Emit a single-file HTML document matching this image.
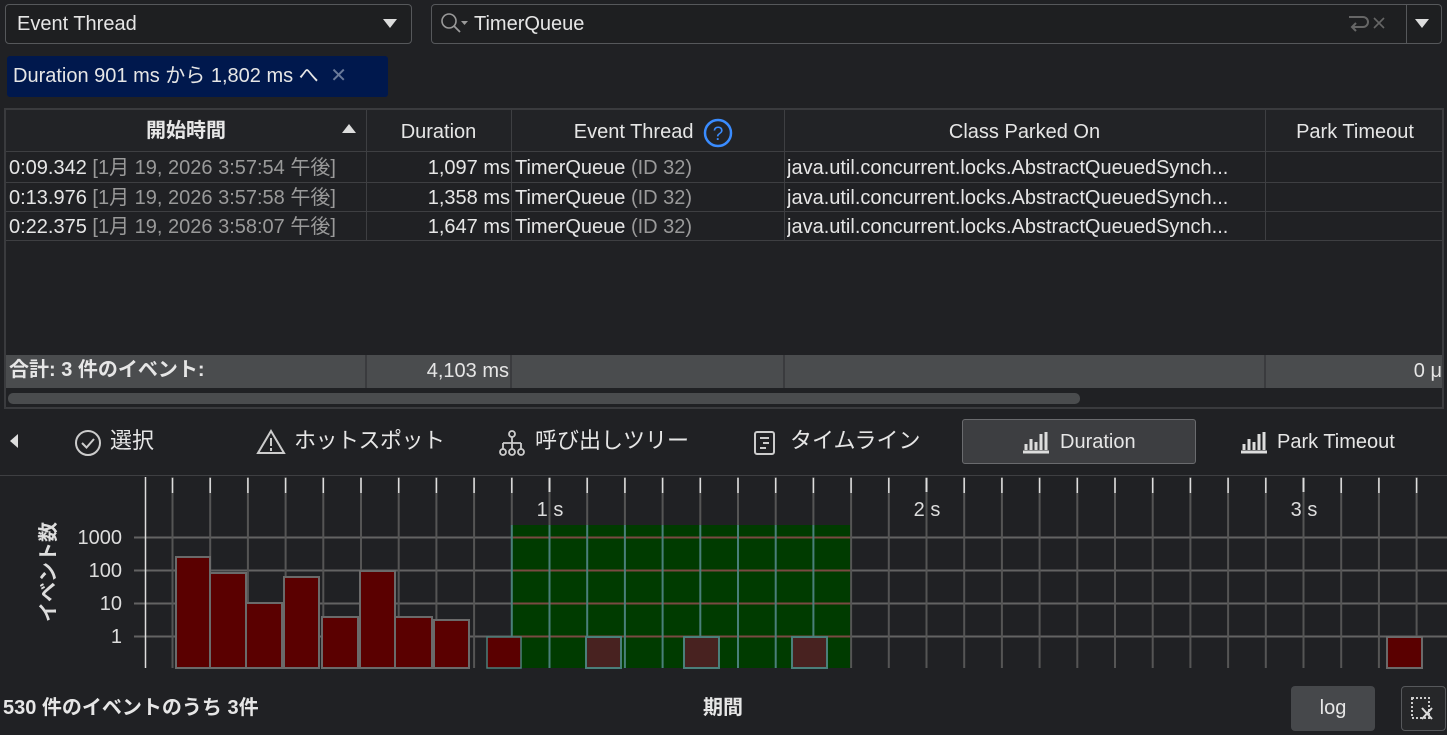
<!DOCTYPE html>
<html><head><meta charset="utf-8"><style>
*{box-sizing:border-box;margin:0;padding:0}
body{width:1447px;height:735px;background:#202124;color:#e6e6e6;font-family:"Liberation Sans","Noto Sans CJK JP",sans-serif;font-size:20px;position:relative;overflow:hidden}
.a{position:absolute;white-space:nowrap;line-height:26px}
.box{border:1px solid #56585b;border-radius:4px;background:#1e1f21}
.g{color:#9a9a9a}
.cell{position:absolute;height:29px;line-height:29px;overflow:hidden;white-space:nowrap}
</style></head><body>
<div class="a box" style="left:5px;top:4px;width:407px;height:40px"></div>
<div class="a" style="left:17px;top:11px">Event Thread</div>
<svg class="a" style="left:383px;top:19px" width="14" height="10"><path d="M0 0H14L7 9Z" fill="#ddd"/></svg>
<div class="a box" style="left:431px;top:4px;width:1011px;height:40px"></div>
<div class="a" style="left:1406px;top:5px;width:1px;height:38px;background:#56585b"></div>
<svg class="a" style="left:1415px;top:19px" width="14" height="10"><path d="M0 0H14L7 9Z" fill="#ddd"/></svg>
<svg class="a" style="left:440px;top:12px" width="30" height="24"><circle cx="9" cy="9" r="7" stroke="#9a9a9a" stroke-width="1.6" fill="none"/><path d="M14 14L20 20" stroke="#9a9a9a" stroke-width="1.8"/><path d="M21 9H28L24.5 13Z" fill="#9a9a9a"/></svg>
<div class="a" style="left:474px;top:11px">TimerQueue</div>
<svg class="a" style="left:1346px;top:12px" width="48" height="24"><path d="M3 5H17A5 5 0 0 1 17 15H7M10 11L6 15L10 19" stroke="#666" stroke-width="2" fill="none"/><path d="M28 6L38 16M38 6L28 16" stroke="#666" stroke-width="1.6"/></svg>
<div class="a" style="left:7px;top:56px;width:381px;height:41px;background:#00184d;border-radius:3px"></div>
<div class="a" style="left:13px;top:63px">Duration 901 ms から 1,802 ms へ <span style="color:#6a7a9a;margin-left:6px">✕</span></div>

<div class="a" style="left:4px;top:108px;width:1440px;height:301px;border:2px solid #3a3b3e;background:#202124"></div>
<div class="a" style="left:6px;top:110px;width:1436px;height:42px;background:#222326;border-bottom:1px solid #3e3f42"></div>
<div class="a" style="left:6px;top:118px;width:360px;text-align:center;font-weight:bold">開始時間</div>
<svg class="a" style="left:342px;top:124px" width="14" height="9"><path d="M0 9H14L7 0Z" fill="#ddd"/></svg>
<div class="a" style="left:366px;top:119px;width:145px;text-align:center">Duration</div>
<div class="a" style="left:511px;top:119px;width:273px;text-align:center">Event Thread&nbsp;&nbsp;&nbsp;&nbsp;&nbsp;</div>
<svg class="a" style="left:703px;top:118px" width="30" height="30"><circle cx="15" cy="15" r="13" stroke="#3a8cff" stroke-width="2.5" fill="none"/><text x="15" y="22" text-anchor="middle" fill="#3a8cff" font-size="19" font-family="Liberation Sans">?</text></svg>
<div class="a" style="left:784px;top:119px;width:481px;text-align:center">Class Parked On</div>
<div class="a" style="left:1265px;top:119px;width:180px;text-align:center">Park Timeout</div>
<div class="a" style="left:366px;top:110px;width:1px;height:131px;background:#3e3f42"></div>
<div class="a" style="left:511px;top:110px;width:1px;height:131px;background:#3e3f42"></div>
<div class="a" style="left:784px;top:110px;width:1px;height:131px;background:#3e3f42"></div>
<div class="a" style="left:1265px;top:110px;width:1px;height:131px;background:#3e3f42"></div>
<div class="a" style="left:6px;top:182px;width:1436px;height:1px;background:#3e3f42"></div>
<div class="a" style="left:6px;top:211px;width:1436px;height:1px;background:#3e3f42"></div>
<div class="a" style="left:6px;top:240px;width:1436px;height:1px;background:#3e3f42"></div>

<div class="cell" style="left:9px;top:154px">0:09.342 <span class="g">[1月 19, 2026 3:57:54 午後]</span></div>
<div class="cell" style="left:366px;top:154px;width:144px;text-align:right">1,097 ms</div>
<div class="cell" style="left:515px;top:154px">TimerQueue <span class="g">(ID 32)</span></div>
<div class="cell" style="left:787px;top:154px">java.util.concurrent.locks.AbstractQueuedSynch...</div>
<div class="cell" style="left:9px;top:184px">0:13.976 <span class="g">[1月 19, 2026 3:57:58 午後]</span></div>
<div class="cell" style="left:366px;top:184px;width:144px;text-align:right">1,358 ms</div>
<div class="cell" style="left:515px;top:184px">TimerQueue <span class="g">(ID 32)</span></div>
<div class="cell" style="left:787px;top:184px">java.util.concurrent.locks.AbstractQueuedSynch...</div>
<div class="cell" style="left:9px;top:213px">0:22.375 <span class="g">[1月 19, 2026 3:58:07 午後]</span></div>
<div class="cell" style="left:366px;top:213px;width:144px;text-align:right">1,647 ms</div>
<div class="cell" style="left:515px;top:213px">TimerQueue <span class="g">(ID 32)</span></div>
<div class="cell" style="left:787px;top:213px">java.util.concurrent.locks.AbstractQueuedSynch...</div>

<div class="a" style="left:6px;top:355px;width:1436px;height:33px;background:#4a4c4e"></div>
<div class="a" style="left:365px;top:355px;width:2px;height:33px;background:#3a3b3e"></div>
<div class="a" style="left:510px;top:355px;width:2px;height:33px;background:#3a3b3e"></div>
<div class="a" style="left:783px;top:355px;width:2px;height:33px;background:#3a3b3e"></div>
<div class="a" style="left:1264px;top:355px;width:2px;height:33px;background:#3a3b3e"></div>
<div class="a" style="left:9px;top:357px;font-weight:bold">合計: 3 件のイベント:</div>
<div class="a" style="left:366px;top:358px;width:143px;text-align:right">4,103 ms</div>
<div class="a" style="left:1380px;top:358px;width:62px;text-align:right;overflow:hidden">0 μ</div>
<div class="a" style="left:8px;top:393px;width:1072px;height:11px;background:#4a4c4e;border-radius:5px"></div>

<svg class="a" style="left:9px;top:434px" width="10" height="14"><path d="M9 0V14L1 7Z" fill="#ddd"/></svg>
<svg class="a" style="left:74px;top:429px" width="28" height="28"><circle cx="14" cy="14" r="12" stroke="#ccc" stroke-width="2" fill="none"/><path d="M8 14L12.5 18.5L20 10" stroke="#ccc" stroke-width="2" fill="none"/></svg>
<div class="a" style="left:110px;top:428px;font-size:22px">選択</div>
<svg class="a" style="left:256px;top:429px" width="30" height="26"><path d="M15 2L28 24H2Z" stroke="#ccc" stroke-width="2" fill="none"/><path d="M15 9V17M15 19V22" stroke="#ccc" stroke-width="2"/></svg>
<div class="a" style="left:294px;top:428px;font-size:22px;letter-spacing:-0.5px">ホットスポット</div>
<svg class="a" style="left:498px;top:429px" width="28" height="28"><circle cx="14" cy="5" r="3" stroke="#ccc" stroke-width="1.8" fill="none"/><path d="M14 8V14M5 14H23M5 14V20M14 14V20M23 14V20" stroke="#ccc" stroke-width="1.8" fill="none"/><circle cx="5" cy="23" r="3" stroke="#ccc" stroke-width="1.8" fill="none"/><circle cx="14" cy="23" r="3" stroke="#ccc" stroke-width="1.8" fill="none"/><circle cx="23" cy="23" r="3" stroke="#ccc" stroke-width="1.8" fill="none"/></svg>
<div class="a" style="left:535px;top:428px;font-size:22px">呼び出しツリー</div>
<svg class="a" style="left:753px;top:430px" width="24" height="26"><rect x="2" y="2" width="19" height="22" rx="2" stroke="#ccc" stroke-width="2" fill="none"/><path d="M7 8H16M10 13H16M7 18H13" stroke="#ccc" stroke-width="2"/></svg>
<div class="a" style="left:790px;top:428px;font-size:22px">タイムライン</div>
<div class="a" style="left:962px;top:419px;width:234px;height:45px;background:#3d3e41;border:1px solid #6a6b6e;border-radius:3px"></div>
<svg class="a" style="left:1022px;top:430px" width="28" height="24"><path d="M1 22H27M4 14V20M9 9V20M14 12V20M19 4V20M24 2V20" stroke="#ddd" stroke-width="3"/></svg>
<div class="a" style="left:1060px;top:429px">Duration</div>
<svg class="a" style="left:1240px;top:430px" width="28" height="24"><path d="M1 22H27M4 14V20M9 9V20M14 12V20M19 4V20M24 2V20" stroke="#ddd" stroke-width="3"/></svg>
<div class="a" style="left:1277px;top:429px">Park Timeout</div>
<div class="a" style="left:0;top:475px;width:1447px;height:1px;background:#3e3f42"></div>

<svg class="a" style="left:0;top:0" width="1447" height="735">
<rect x="511" y="525" width="340" height="143" fill="#003b00"/>
<path d="M134 537.5H1447M134 570.5H1447M134 603.5H1447M134 636.5H1447" stroke="#636363" stroke-width="2"/>
<path d="M511 537.5H851M511 570.5H851M511 603.5H851M511 636.5H851" stroke="#7a4a42" stroke-width="2"/>
<path d="M172.5 477V668M210.2 477V668M247.9 477V668M285.6 477V668M323.3 477V668M361 477V668M398.7 477V668M436.4 477V668M474.1 477V668M511.8 477V525M549.5 477V525M587.2 477V525M624.9 477V525M662.6 477V525M700.3 477V525M738 477V525M775.7 477V525M813.4 477V525M851.1 477V668M888.8 477V668M926.5 477V668M964.2 477V668M1001.9 477V668M1039.6 477V668M1077.3 477V668M1115 477V668M1152.7 477V668M1190.4 477V668M1228.1 477V668M1265.8 477V668M1303.5 477V668M1341.2 477V668M1378.9 477V668M1416.6 477V668" stroke="#555" stroke-width="2"/>
<path d="M511.8 525V668M549.5 525V668M587.2 525V668M624.9 525V668M662.6 525V668M700.3 525V668M738 525V668M775.7 525V668M813.4 525V668" stroke="#4a7f7a" stroke-width="2"/>
<path d="M172.5 478V493M210.2 478V493M247.9 478V493M285.6 478V493M323.3 478V493M361 478V493M398.7 478V493M436.4 478V493M474.1 478V493M511.8 478V493M587.2 478V493M624.9 478V493M662.6 478V493M700.3 478V493M738 478V493M775.7 478V493M813.4 478V493M851.1 478V493M888.8 478V493M964.2 478V493M1001.9 478V493M1039.6 478V493M1077.3 478V493M1115 478V493M1152.7 478V493M1190.4 478V493M1228.1 478V493M1265.8 478V493M1341.2 478V493M1378.9 478V493M1416.6 478V493" stroke="#ddd" stroke-width="1.5"/>
<path d="M549.5 478V492M926.5 478V492M1303.5 478V492" stroke="#ddd" stroke-width="2"/>
<path d="M145.5 477V668" stroke="#ddd" stroke-width="1.5"/>
<g fill="#5a0000" stroke="#6a6a6a" stroke-width="2">
<rect x="176" y="557" width="34" height="111"/>
<rect x="210" y="573" width="36" height="95"/>
<rect x="246" y="603" width="36" height="65"/>
<rect x="284" y="577" width="35" height="91"/>
<rect x="322" y="617" width="36" height="51"/>
<rect x="360" y="571" width="35" height="97"/>
<rect x="395" y="617" width="37" height="51"/>
<rect x="434" y="620" width="35" height="48"/>
<rect x="1387" y="637" width="35" height="31"/>
</g>
<rect x="487" y="637" width="34" height="31" fill="#5a0000" stroke="#4a7f7a" stroke-width="1.5"/>
<g fill="#482220" stroke="#4a7f7a" stroke-width="2">
<rect x="586" y="637" width="35" height="31"/>
<rect x="684" y="637" width="35" height="31"/>
<rect x="792" y="637" width="35" height="31"/>
</g>
<g fill="#ddd" font-family="Liberation Sans" font-size="20">
<text x="550" y="516" text-anchor="middle">1 s</text>
<text x="927" y="516" text-anchor="middle">2 s</text>
<text x="1304" y="516" text-anchor="middle">3 s</text>
<text x="122" y="544" text-anchor="end">1000</text>
<text x="122" y="577" text-anchor="end">100</text>
<text x="122" y="610" text-anchor="end">10</text>
<text x="122" y="643" text-anchor="end">1</text>
<text transform="translate(55 572) rotate(-90)" text-anchor="middle" font-weight="bold" font-family="Liberation Sans, Noto Sans CJK JP, sans-serif">イベント数</text>
</g>
</svg>

<div class="a" style="left:3px;top:695px;font-weight:bold">530 件のイベントのうち 3件</div>
<div class="a" style="left:703px;top:695px;font-weight:bold">期間</div>
<div class="a" style="left:1291px;top:686px;width:84px;height:45px;background:#46484b;border-radius:4px;text-align:center;line-height:44px">log</div>
<div class="a" style="left:1401px;top:686px;width:45px;height:45px;border:1px solid #56585b;border-radius:4px;background:#262729"></div>
<svg class="a" style="left:1409px;top:696px" width="28" height="26"><rect x="3" y="2" width="17" height="20" stroke="#ccc" stroke-width="2" stroke-dasharray="2 2" fill="none"/><path d="M13 12L23 23M23 12L13 23" stroke="#ddd" stroke-width="2"/></svg>
</body></html>
